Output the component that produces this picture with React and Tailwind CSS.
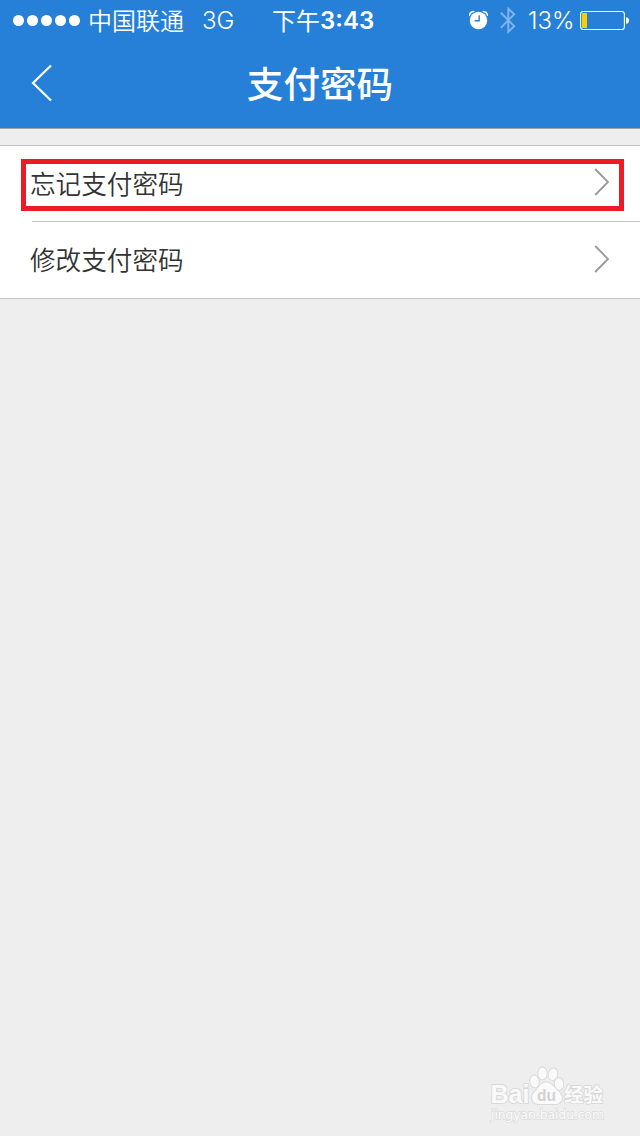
import React from 'react';

const menuItems = [
  { id: 'forgot', title: '忘记支付密码', highlighted: true },
  { id: 'change', title: '修改支付密码', highlighted: false },
];

function SignalDots() {
  return (
    <div className="ml-[13px] flex gap-[3px]">
      {[1, 2, 3, 4, 5].map((n) => (
        <span key={n} className="h-[11px] w-[11px] rounded-full bg-white" />
      ))}
    </div>
  );
}

function AlarmIcon() {
  return (
    <svg width="20" height="20" viewBox="0 0 20 20" className="shrink-0" fill="none">
      <circle cx="9.5" cy="10.5" r="8.7" fill="#fff" />
      <path d="M.6 5.2C.8 3 2.4 1.6 4.8 1.4M18.4 5.2c-.2-2.2-1.8-3.6-4.2-3.8" stroke="#fff" strokeWidth="1.5" strokeLinecap="round" />
      <path d="M10.2 5.2v5.5H5.5" stroke="#2680d8" strokeWidth="1.4" />
    </svg>
  );
}

function BluetoothIcon() {
  return (
    <svg width="16" height="28" viewBox="0 0 16 28" className="shrink-0" fill="none">
      <path d="M.8 6.6 14.2 20.2 8.3 25.8V2.6l5.9 5.6L.8 21.8" stroke="#80b5eb" strokeWidth="1.9" />
    </svg>
  );
}

function BatteryIcon() {
  return (
    <svg width="50" height="20" viewBox="0 0 50 20" className="shrink-0" fill="none">
      <rect x=".6" y="1.5" width="43.8" height="18" rx="2.8" stroke="#fff" strokeWidth="1.1" />
      <rect x="2" y="3" width="5" height="15" rx=".8" fill="#ffcc00" />
      <path d="M46 7.2c2.1.3 3 1.6 3 3.3s-.9 3-3 3.3z" fill="#fff" />
    </svg>
  );
}

function StatusBar() {
  return (
    <div className="flex h-10 items-center text-[24px] leading-10 whitespace-nowrap">
      <div className="flex w-[272px] items-center">
        <SignalDots />
        <span className="ml-[8px] font-[350]">中国联通</span>
        <span className="ml-[18px] pt-[2px] font-[Inter] text-[24px] font-[350]">3G</span>
      </div>
      <div className="flex w-[197px] items-center">
        <span className="w-[48px]">下午</span>
        <span className="pt-[2px] font-[Inter] text-[24px] font-semibold">3:43</span>
      </div>
      <AlarmIcon />
      <div className="ml-[11px]">
        <BluetoothIcon />
      </div>
      <span className="ml-[12px] w-[52px] pt-[2px] font-[Inter] text-[24px] font-[350]">13%</span>
      <BatteryIcon />
    </div>
  );
}

function NavBar() {
  return (
    <div className="grid h-[88px] grid-cols-[64px_1fr_64px] items-center">
      <button type="button" className="pb-[2px] pl-[31px]">
        <svg width="22" height="38" viewBox="0 0 22 38" fill="none">
          <path d="M20 1.5 2 19l18 17.5" stroke="#fff" strokeWidth="2.2" />
        </svg>
      </button>
      <h1 className="pb-[2px] text-center text-[36.6px] leading-[60px] font-medium">支付密码</h1>
    </div>
  );
}

function MenuRow({ item }) {
  return (
    <div className="relative flex h-[75px] items-center justify-between pr-[30px] pl-[30px] last:h-[76px]">
      <span className="pb-[2px] text-[25.6px] leading-[40px] font-[350]">{item.title}</span>
      <svg width="16" height="28" viewBox="0 0 16 28" className="mb-[3px]" fill="none">
        <path d="M1.2 1 14 14 1.2 27" stroke="#999" strokeWidth="1.8" />
      </svg>
      {item.highlighted && (
        <div className="absolute top-[13px] left-[21px] h-[52px] w-[603px] border-5 border-[#ed1c24]" />
      )}
    </div>
  );
}

function Watermark() {
  return (
    <svg width="140" height="70" viewBox="0 0 140 70" className="absolute right-[16px] bottom-[6px]">
      <g fill="#fafafa" stroke="#d9d9d9" strokeWidth="1.8" paintOrder="stroke" strokeLinejoin="round">
        <ellipse cx="50.5" cy="21.5" rx="4.3" ry="6" transform="rotate(-8 50.5 21.5)" />
        <ellipse cx="58.5" cy="13.5" rx="4.2" ry="6" />
        <ellipse cx="69" cy="14.2" rx="4.3" ry="5.8" transform="rotate(10 69 14.2)" />
        <ellipse cx="75" cy="24" rx="4.3" ry="6" transform="rotate(-8 75 24)" />
        <path d="M62 22.5c-6 0-7 6-10.5 8.5-5 4-5 12.5 3 13 4 .2 12 0 16 0 9 0 9-8.5 4-12.5C70.5 28 68 22.5 62 22.5z" />
        <text x="6.5" y="43" fontSize="25" fontWeight="700" fontFamily="Liberation Sans, sans-serif" textLength="39" lengthAdjust="spacingAndGlyphs">Bai</text>
        <text x="80" y="41.5" fontSize="19.5" fontWeight="700" fontFamily="Noto Sans CJK SC, sans-serif" textLength="39">经验</text>
      </g>
      <text x="7" y="58.8" fontSize="12" fill="#fafafa" stroke="#dcdcdc" strokeWidth="1.4" paintOrder="stroke" fontFamily="DejaVu Sans, sans-serif" textLength="113" lengthAdjust="spacingAndGlyphs">jingyan.baidu.com</text>
      <text x="53" y="41" fontSize="17" fontWeight="700" fill="#d2d2d2" fontFamily="Liberation Sans, sans-serif" textLength="19" lengthAdjust="spacingAndGlyphs">du</text>
    </svg>
  );
}

export default function App() {
  return (
    <div className="relative h-[1136px] w-[640px] overflow-hidden bg-[#eeeeee] font-['Noto_Sans_CJK_SC',sans-serif] text-[#333333]">
      <header className="h-[129px] border-b border-[#a3a3a3] bg-[#2680d8] text-white">
        <StatusBar />
        <NavBar />
      </header>

      <main className="mt-4 border-y border-[#c4c4c4] bg-white">
        <MenuRow item={menuItems[0]} />
        <hr className="ml-8 border-[#c4c4c4]" />
        <MenuRow item={menuItems[1]} />
      </main>

      <Watermark />
    </div>
  );
}
